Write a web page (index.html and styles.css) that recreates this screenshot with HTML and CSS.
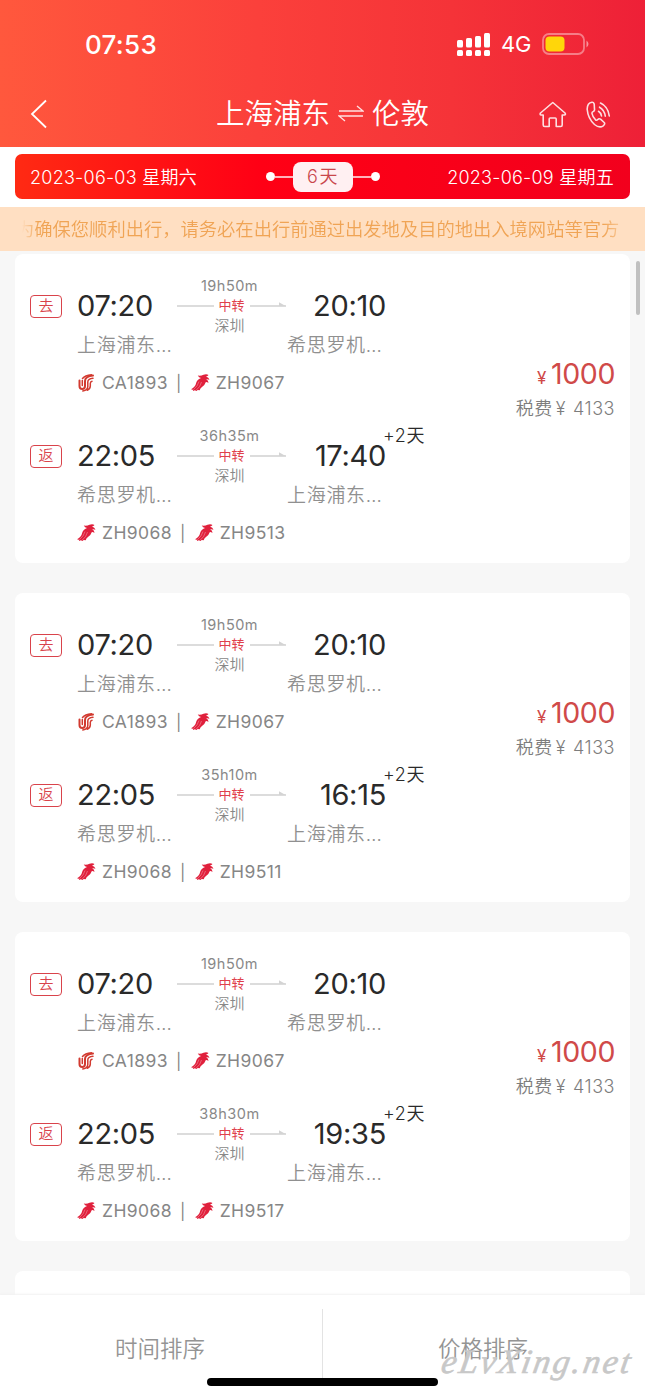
FILE: index.html
```
<!DOCTYPE html>
<html lang="zh-CN">
<head>
    <meta charset="UTF-8">
    <meta name="viewport" content="width=device-width, initial-scale=1.0">
    <title>上海浦东 ⇌ 伦敦</title>
    <link rel="stylesheet" href="styles.css">
</head>
<body>
<svg class="sprite" width="0" height="0">
    <!-- Air China -->
    <symbol id="logo-ca" viewBox="0 0 18 18">
        <g fill="none" stroke="#d23a30" stroke-linecap="round">
            <path stroke-width="2" d="M2 6.500V12q0 3 2.700 3 2.800 0 2.800-3V7q0-4.500 8-5.500"/>
            <path stroke-width="1.500" d="M4.800 6.500v5M15.500 4.300q-5.200.5-5.200 3.700v4.500q0 3.700-5 4.400M14.500 7.300q-1.700.2-1.700 2.200v2.500q0 3-3 4.200M5 4.500q2.500-3 9-3.700"/>
        </g>
    </symbol>
    <!-- Shenzhen Airlines -->
    <symbol id="logo-zh" viewBox="0 0 19 18">
        <path fill="#e0203c" d="M6.800 1.500Q10 2 12.500.8q3-1 5 .2-.8 1.200-2.500 1.500 2.700 1 3.500 3.200-2-.8-3.300-.4 2.300 1.200 2.300 3.700-1.800-1.200-2.800-.8-.7 2.800-4 5-1.500 1.200-2 3l-2-.3-1.200 1.100-1.800-.7-1.300.7-.7-1.200L0 15.300Q4.500 12.500 5 9.500 5.700 5.500 10 4 7.800 3.500 6.800 1.500z"/>
        <path fill="none" stroke="#fff" stroke-opacity=".6" stroke-width=".5" d="M2.300 15.800Q7 12 8 7.500M5 16.300q4.500-3.500 5.500-8.300"/>
    </symbol>
</svg>

<div class="page">
    <header class="header">
        <div class="status-bar">
            <span class="clock">07:53</span>
            <div class="status-icons">
                <svg width="34" height="23" viewBox="0 0 34 23" fill="#fff">
                    <rect x="0" y="7" width="6" height="7.500" rx="1.500"/>
                    <rect x="9" y="5" width="6" height="9.500" rx="1.500"/>
                    <rect x="18" y="3" width="6" height="11.500" rx="1.500"/>
                    <rect x="27" y="0" width="6" height="14.500" rx="1.500"/>
                    <rect x="0" y="17" width="6" height="6" rx="1.500"/>
                    <rect x="9" y="17" width="6" height="6" rx="1.500"/>
                    <rect x="18" y="17" width="6" height="6" rx="1.500"/>
                    <rect x="27" y="17" width="6" height="6" rx="1.500"/>
                </svg>
                <span class="network">4G</span>
                <svg width="47" height="22" viewBox="0 0 47 22">
                    <rect x="1" y="1" width="41" height="20" rx="6" fill="none" stroke="#fff" stroke-opacity=".4" stroke-width="1.800"/>
                    <rect x="3.500" y="3.500" width="19" height="15" rx="4" fill="#ffd60a"/>
                    <path d="M44.500 7.500q4 3.500 0 7z" fill="#fff" fill-opacity=".5"/>
                </svg>
            </div>
        </div>
        <div class="nav">
            <svg class="back" width="18" height="30" viewBox="0 0 18 30" fill="none" stroke="#fff" stroke-width="1.800">
                <path d="M16 1.500L2 15l14 13.500"/>
            </svg>
            <h1>
                <span>上海浦东</span>
                <svg width="26" height="18" viewBox="0 0 26 18" fill="none" stroke="#fff" stroke-opacity=".85" stroke-width="1.300">
                    <path d="M1 6h24l-6-5M25 11H1l6 5"/>
                </svg>
                <span>伦敦</span>
            </h1>
            <div class="nav-icons">
                <svg width="28" height="27" viewBox="0 0 28 27" fill="none" stroke="#fff" stroke-opacity=".85" stroke-width="1.600" stroke-linejoin="round">
                    <path d="M13.800 1.500L1.500 12q-1 1.800.7 2h2v10q0 1.500 1.500 1.500h4.500V18q0-1 1-1h5q1 0 1 1v7.500h4.500q1.500 0 1.500-1.500V14h2q2-.2.800-2z"/>
                </svg>
                <svg width="25" height="27" viewBox="0 0 25 27" fill="none" stroke="#fff" stroke-opacity=".85" stroke-width="1.600" stroke-linecap="round" stroke-linejoin="round">
                    <path d="M6 1.200Q1 2 1.200 8.500q.8 9 7.300 15 5 4 8.700 1.300 2.300-1.800 1-3.300l-3.700-3.300q-1.500-1-2.700.3-1.200 1.300-2.300.3-3-3-3.500-6.300-.2-1.500 1.300-2 1.500-.7 1.200-2.200L8.200 3Q7.500 1 6 1.200z"/>
                    <path d="M14.500 2q7.500 3.500 8.800 13M13.500 6.200q5 2.800 5.800 9M12.500 10.300q2.500 1.500 3 4.700"/>
                </svg>
            </div>
        </div>
    </header>

    <div class="date-wrap">
        <div class="date-bar">
            <span>2023-06-03 星期六</span>
            <div class="days">
                <i class="dot"></i><i class="line"></i>
                <span class="days-label">6天</span>
                <i class="line"></i><i class="dot"></i>
            </div>
            <span>2023-06-09 星期五</span>
        </div>
    </div>

    <div class="notice">
        <div class="notice-text"><span>为确保您顺利出行，请务必在出行前通过出发地及目的地出入境网站等官方</span></div>
    </div>

    <main class="list">
        <div class="scrollbar"></div>

        <section class="card">
            <div class="legs">
                <div class="leg">
                    <span class="tag">去</span>
                    <div class="stop">
                        <div class="time">07:20</div>
                        <div class="city">上海浦东…</div>
                    </div>
                    <div class="via">
                        <div class="duration">19h50m</div>
                        <div class="transfer"><i class="line"></i><b>中转</b><i class="line arrow"></i></div>
                        <div class="via-city">深圳</div>
                    </div>
                    <div class="stop arrive">
                        <div class="time">20:10</div>
                        <div class="city">希思罗机…</div>
                    </div>
                    <div class="flights">
                        <svg class="logo"><use href="#logo-ca"/></svg><span>CA1893</span><span class="sep">|</span>
                        <svg class="logo"><use href="#logo-zh"/></svg><span>ZH9067</span>
                    </div>
                </div>
                <div class="leg">
                    <span class="tag">返</span>
                    <div class="stop">
                        <div class="time">22:05</div>
                        <div class="city">希思罗机…</div>
                    </div>
                    <div class="via">
                        <div class="duration">36h35m</div>
                        <div class="transfer"><i class="line"></i><b>中转</b><i class="line arrow"></i></div>
                        <div class="via-city">深圳</div>
                    </div>
                    <div class="stop arrive">
                        <div class="time">17:40<sup class="plus">+2天</sup></div>
                        <div class="city">上海浦东…</div>
                    </div>
                    <div class="flights">
                        <svg class="logo"><use href="#logo-zh"/></svg><span>ZH9068</span><span class="sep">|</span>
                        <svg class="logo"><use href="#logo-zh"/></svg><span>ZH9513</span>
                    </div>
                </div>
            </div>
            <div class="price">
                <div class="fare"><small>¥</small>1000</div>
                <div class="tax">税费<span>¥</span>4133</div>
            </div>
        </section>

        <section class="card">
            <div class="legs">
                <div class="leg">
                    <span class="tag">去</span>
                    <div class="stop">
                        <div class="time">07:20</div>
                        <div class="city">上海浦东…</div>
                    </div>
                    <div class="via">
                        <div class="duration">19h50m</div>
                        <div class="transfer"><i class="line"></i><b>中转</b><i class="line arrow"></i></div>
                        <div class="via-city">深圳</div>
                    </div>
                    <div class="stop arrive">
                        <div class="time">20:10</div>
                        <div class="city">希思罗机…</div>
                    </div>
                    <div class="flights">
                        <svg class="logo"><use href="#logo-ca"/></svg><span>CA1893</span><span class="sep">|</span>
                        <svg class="logo"><use href="#logo-zh"/></svg><span>ZH9067</span>
                    </div>
                </div>
                <div class="leg">
                    <span class="tag">返</span>
                    <div class="stop">
                        <div class="time">22:05</div>
                        <div class="city">希思罗机…</div>
                    </div>
                    <div class="via">
                        <div class="duration">35h10m</div>
                        <div class="transfer"><i class="line"></i><b>中转</b><i class="line arrow"></i></div>
                        <div class="via-city">深圳</div>
                    </div>
                    <div class="stop arrive">
                        <div class="time">16:15<sup class="plus">+2天</sup></div>
                        <div class="city">上海浦东…</div>
                    </div>
                    <div class="flights">
                        <svg class="logo"><use href="#logo-zh"/></svg><span>ZH9068</span><span class="sep">|</span>
                        <svg class="logo"><use href="#logo-zh"/></svg><span>ZH9511</span>
                    </div>
                </div>
            </div>
            <div class="price">
                <div class="fare"><small>¥</small>1000</div>
                <div class="tax">税费<span>¥</span>4133</div>
            </div>
        </section>

        <section class="card">
            <div class="legs">
                <div class="leg">
                    <span class="tag">去</span>
                    <div class="stop">
                        <div class="time">07:20</div>
                        <div class="city">上海浦东…</div>
                    </div>
                    <div class="via">
                        <div class="duration">19h50m</div>
                        <div class="transfer"><i class="line"></i><b>中转</b><i class="line arrow"></i></div>
                        <div class="via-city">深圳</div>
                    </div>
                    <div class="stop arrive">
                        <div class="time">20:10</div>
                        <div class="city">希思罗机…</div>
                    </div>
                    <div class="flights">
                        <svg class="logo"><use href="#logo-ca"/></svg><span>CA1893</span><span class="sep">|</span>
                        <svg class="logo"><use href="#logo-zh"/></svg><span>ZH9067</span>
                    </div>
                </div>
                <div class="leg">
                    <span class="tag">返</span>
                    <div class="stop">
                        <div class="time">22:05</div>
                        <div class="city">希思罗机…</div>
                    </div>
                    <div class="via">
                        <div class="duration">38h30m</div>
                        <div class="transfer"><i class="line"></i><b>中转</b><i class="line arrow"></i></div>
                        <div class="via-city">深圳</div>
                    </div>
                    <div class="stop arrive">
                        <div class="time">19:35<sup class="plus">+2天</sup></div>
                        <div class="city">上海浦东…</div>
                    </div>
                    <div class="flights">
                        <svg class="logo"><use href="#logo-zh"/></svg><span>ZH9068</span><span class="sep">|</span>
                        <svg class="logo"><use href="#logo-zh"/></svg><span>ZH9517</span>
                    </div>
                </div>
            </div>
            <div class="price">
                <div class="fare"><small>¥</small>1000</div>
                <div class="tax">税费<span>¥</span>4133</div>
            </div>
        </section>

        <section class="card"></section>
    </main>

    <footer class="sort-bar">
        <div class="sort">时间排序</div>
        <div class="divider"></div>
        <div class="sort">价格排序</div>
        <div class="home-indicator"></div>
        <div class="watermark">eLvXing.net</div>
    </footer>
</div>
</body>
</html>
```
FILE: styles.css
```
* {
    box-sizing: border-box;
}

body {
    margin: 0;
    font-family: Inter, "Noto Sans CJK SC", sans-serif;
    font-weight: 350;
    background-color: #f7f7f7;
}

.sprite {
    position: absolute;
}

.page {
    height: 1398px;
    display: flex;
    flex-direction: column;
    overflow: hidden;
}

/* Header */
.header {
    height: 147px;
    flex: none;
    color: #fff;
    background: linear-gradient(90deg, #ff583d 0%, #fb403b 40%, #f53338 70%, #ee2037 100%);
}

.status-bar {
    height: 88px;
    padding: 0 56px 0 85px;
    display: flex;
    justify-content: space-between;
    align-items: center;
}

.clock {
    font-size: 26px;
    font-weight: 500;
    letter-spacing: 0.3px;
}

.status-icons {
    display: flex;
    align-items: center;
}

.network {
    width: 30px;
    margin: 0 11px 0 10px;
    font-size: 22px;
    font-weight: 400;
    letter-spacing: -0.3px;
}

.nav {
    height: 52px;
    padding: 0 34px 0 30px;
    display: grid;
    grid-template-columns: 1fr auto 1fr;
    align-items: center;
}

.nav h1 {
    margin: 0 -3px 1px 1px;
    display: flex;
    align-items: center;
    gap: 8px;
    font-size: 28.500px;
    font-weight: 350;
    line-height: 40px;
}

.nav-icons {
    display: flex;
    justify-content: flex-end;
    gap: 19px;
}

/* Dates */
.date-wrap {
    height: 60px;
    flex: none;
    padding: 7px 15px 8px;
    background-color: #fff;
}

.date-bar {
    height: 45px;
    padding: 0 16px 0 15px;
    display: grid;
    grid-template-columns: 1fr auto 1fr;
    align-items: center;
    border-radius: 7px;
    color: #fff;
    font-size: 18px;
    letter-spacing: 0.25px;
    background: linear-gradient(90deg, #ff2a13 0%, #ff0015 40%, #f2001d 100%);
}

.date-bar > span {
    padding-bottom: 2px;
}

.date-bar > span:last-child {
    text-align: right;
}

.days {
    margin-left: 2px;
    display: flex;
    align-items: center;
}

.days .dot {
    width: 9px;
    height: 9px;
    border-radius: 50%;
    background-color: #fff;
}

.days .line {
    width: 18px;
    height: 2px;
    background-color: #ffb3ba;
}

.days-label {
    width: 60px;
    height: 30px;
    line-height: 30px;
    border-radius: 8px;
    text-align: center;
    letter-spacing: 1.500px;
    color: #c9474b;
    background-color: #fff0f2;
}

/* Notice */
.notice {
    height: 44px;
    flex: none;
    padding: 0 24px 0 22px;
    background-color: #ffdfc2;
}

.notice-text {
    height: 44px;
    line-height: 45px;
    overflow: hidden;
    white-space: nowrap;
    font-size: 18.300px;
    color: #f0a455;
    -webkit-mask-image: linear-gradient(90deg, transparent, #000 16px, #000 calc(100% - 18px), rgba(0, 0, 0, 0.4));
    mask-image: linear-gradient(90deg, transparent, #000 16px, #000 calc(100% - 18px), rgba(0, 0, 0, 0.4));
}

.notice-text span {
    margin-left: -6px;
}

/* Result list */
.list {
    position: relative;
    flex: 1;
    min-height: 0;
    overflow: hidden;
    padding: 3px 15px 0;
    display: flex;
    flex-direction: column;
    gap: 30px;
}

.scrollbar {
    position: absolute;
    top: 10px;
    right: 5px;
    width: 4px;
    height: 54px;
    border-radius: 2px;
    background-color: #c0c0c0;
}

.card {
    height: 309px;
    flex: none;
    padding: 0 15px;
    display: flex;
    justify-content: space-between;
    border-radius: 8px;
    background-color: #fff;
}

.leg {
    height: 150px;
    padding-top: 22px;
    display: grid;
    grid-template-columns: 47px 100px 110px 99px;
    grid-template-rows: 88px 36px;
    color: #888;
}

.tag {
    width: 32px;
    height: 23px;
    margin-top: 19px;
    line-height: 20px;
    border: 1.500px solid #d9434b;
    border-radius: 4px;
    text-align: center;
    font-size: 15px;
    color: #d9434b;
}

.time {
    position: relative;
    height: 40px;
    margin-top: 10px;
    line-height: 40px;
    font-size: 29px;
    font-weight: 400;
    letter-spacing: -0.3px;
    color: #2a2a2a;
}

.city {
    height: 36px;
    line-height: 40px;
    font-size: 19px;
    letter-spacing: 0.7px;
    white-space: nowrap;
    color: #909090;
}

.arrive .time {
    text-align: right;
}

.plus {
    position: absolute;
    left: 96px;
    top: -10px;
    line-height: 20px;
    font-size: 18px;
    font-weight: 350;
    letter-spacing: 0.7px;
    white-space: nowrap;
}

.via {
    padding-right: 1px;
    text-align: center;
}

.duration {
    height: 20px;
    padding-right: 4px;
    line-height: 20px;
    font-size: 14.500px;
    font-weight: 400;
    letter-spacing: 0.5px;
}

.transfer {
    height: 20px;
    display: flex;
    align-items: center;
    gap: 5px;
}

.transfer .line {
    flex: 1;
    height: 1.500px;
    background-color: #dcdcdc;
}

.transfer .arrow::after {
    content: "";
    display: block;
    width: 7px;
    height: 4px;
    margin: 0 0 0 auto;
    background-color: #d4d4d4;
    clip-path: polygon(0 0, 100% 100%, 0 100%);
    transform: translateY(-3px);
}

.transfer b {
    height: 20px;
    line-height: 19px;
    font-size: 13px;
    font-weight: 400;
    color: #e0404b;
}

.via-city {
    height: 19px;
    padding-right: 4px;
    line-height: 19px;
    font-size: 15px;
}

.flights {
    grid-column: 2 / -1;
    height: 36px;
    padding-top: 1px;
    display: flex;
    align-items: center;
    font-size: 17.500px;
    font-weight: 400;
    letter-spacing: 0.4px;
    color: #868686;
}

.flights .logo {
    width: 19px;
    height: 18px;
    margin-right: 6px;
}

.flights .sep {
    margin: 0 9px 0 8px;
    font-size: 16px;
}

.price {
    padding-top: 100px;
    text-align: right;
}

.fare {
    height: 40px;
    line-height: 40px;
    font-size: 28.500px;
    font-weight: 400;
    letter-spacing: -0.4px;
    color: #d04a49;
}

.fare small {
    margin-right: 5px;
    font-size: 17px;
}

.tax {
    height: 30px;
    line-height: 30px;
    font-size: 18px;
    letter-spacing: 0.5px;
    color: #7d7d7d;
}

.tax span {
    margin: 0 7px 0 3px;
}

/* Footer */
.sort-bar {
    position: relative;
    height: 103px;
    flex: none;
    padding-top: 14px;
    display: flex;
    background-color: #fff;
    box-shadow: 0 -1px 2px #f1f1f1;
}

.sort {
    flex: 1;
    padding: 20px 2px 0 0;
    line-height: 40px;
    text-align: center;
    font-size: 22.500px;
    color: #949494;
}

.divider {
    width: 1px;
    height: 69px;
    background-color: #e3e3e3;
}

.home-indicator {
    position: absolute;
    left: 207px;
    bottom: 12px;
    width: 231px;
    height: 8px;
    border-radius: 4px;
    background-color: #000;
}

.watermark {
    position: absolute;
    right: 12px;
    bottom: 16px;
    font-family: "Liberation Serif", serif;
    font-size: 34px;
    font-style: italic;
    font-weight: 400;
    line-height: 40px;
    letter-spacing: 2.500px;
    color: #c8c8c8;
    transform: skewX(-10deg);
    -webkit-text-stroke: 0.6px #c8c8c8;
}
```
